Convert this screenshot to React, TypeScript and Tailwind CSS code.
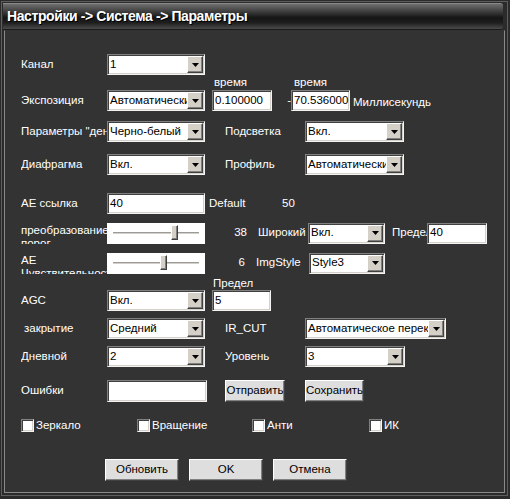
import React from "react";

const sunken =
  "border border-[#808080] border-b-[#f4f4f4] border-r-[#f4f4f4] shadow-[inset_1px_1px_0_#404040,inset_-1px_-1px_0_#d4d0c8]";
const raised =
  "border border-[#ffffff] border-b-[#404040] border-r-[#404040] shadow-[inset_-1px_-1px_0_#808080]";

function Arrow() {
  return (
    <svg width="7" height="4" viewBox="0 0 7 4" aria-hidden="true">
      <path d="M0 0h7L3.5 4z" fill="#000" />
    </svg>
  );
}

function Select({ w, text }: { w: string; text: string }) {
  return (
    <div className={`${w} h-[21px] shrink-0 bg-white flex items-center ${sunken}`}>
      <span className="flex-1 min-w-0 pl-[2px] text-black whitespace-nowrap overflow-hidden">
        {text}
      </span>
      <div className={`w-[16px] h-[17px] mr-[1px] bg-[#d4d0c8] flex items-center justify-center ${raised}`}>
        <Arrow />
      </div>
    </div>
  );
}

function Input({ w, h = "h-[21px]", value }: { w: string; h?: string; value: string }) {
  return (
    <div className={`${w} ${h} shrink-0 bg-white flex items-center pl-[2px] text-black whitespace-nowrap overflow-hidden ${sunken}`}>
      {value}
    </div>
  );
}

function Button({ w, label }: { w: string; label: string }) {
  return (
    <div className={`${w} h-[22px] shrink-0 bg-[#dedede] flex items-center justify-center text-black ${raised}`}>
      {label}
    </div>
  );
}

function Slider({ pos }: { pos: number }) {
  return (
    <div className="w-[98px] h-[21px] shrink-0 bg-white flex items-center px-[6px]">
      <div className="relative flex-1 h-[3px] border-t border-[#9a9a9a] border-b border-b-[#ffffff] bg-[#d4d0c8]">
        <div
          className={`absolute top-[-8px] w-[7px] h-[15px] bg-[#d4d0c8] ${raised}`}
          style={{ left: pos }}
        />
      </div>
    </div>
  );
}

function Label({ children, w = "w-[86px]", extra = "" }: { children: React.ReactNode; w?: string; extra?: string }) {
  return (
    <div className={`${w} h-[21px] shrink-0 flex items-center whitespace-nowrap overflow-hidden ${extra}`}>
      {children}
    </div>
  );
}

function TwoLine({ text }: { text: string }) {
  return (
    <div className="w-[86px] h-[22px] shrink-0 overflow-hidden leading-[13px] pt-[2px]">{text}</div>
  );
}

function Check({ w, label }: { w: string; label: string }) {
  return (
    <div className={`${w} flex items-center shrink-0`}>
      <div className={`w-[13px] h-[13px] bg-white ${sunken}`} />
      <span className="ml-[2px] leading-[13px]">{label}</span>
    </div>
  );
}

export default function App() {
  return (
    <div className="w-[510px] h-[499px] bg-[#2b2b2b] p-[1px] font-['Liberation_Sans',Arial,sans-serif] text-[11.5px] text-white">
      <div className="h-[495px] w-[507px] border border-[#5e5e5e] p-[1px] flex flex-col">
        <div className="h-[27px] shrink-0 mr-[3px] flex items-center pl-[4px] border-t border-[#8a8a8a] border-b border-b-[#1a1a1a] bg-[linear-gradient(#6e6e6e_0%,#3e3e3e_30%,#151515_55%,#1e1e1e_75%,#4a4a4a_100%)] rounded-r-[3px]">
          <span className="text-[14px] font-bold tracking-[-0.4px] text-white [text-shadow:1px_1px_0_#000]">
            Настройки -&gt; Система -&gt; Параметры
          </span>
        </div>
        <div className="flex-1 mx-[1px] mb-[1px] bg-[#333333] border border-[#8a8a8a] border-t-[#333333] pl-[16px] flex flex-col">
          {/* Канал */}
          <div className="mt-[23px] flex items-center">
            <Label>Канал</Label>
            <Select w="w-[98px]" text="1" />
          </div>

          {/* Экспозиция */}
          <div className="flex items-end">
            <Label>Экспозиция</Label>
            <Select w="w-[98px]" text="Автоматически" />
            <div className="ml-[7px] flex flex-col">
              <span className="h-[14px] leading-[14px] pl-[2px]">время</span>
              <div className="mt-[1px]">
                <Input w="w-[60px]" value="0.100000" />
              </div>
            </div>
            <span className="w-[19px] h-[21px] flex items-center justify-end">-</span>
            <div className="flex flex-col">
              <span className="h-[14px] leading-[14px] pl-[3px]">время</span>
              <div className="mt-[1px]">
                <Input w="w-[59px]" value="70.536000" />
              </div>
            </div>
            <span className="ml-[3px] h-[21px] flex items-center pt-[4px]">Миллисекундь</span>
          </div>

          {/* Параметры день/ночь */}
          <div className="mt-[10px] flex items-center">
            <Label>Параметры "день/ночь"</Label>
            <Select w="w-[98px]" text="Черно-белый" />
            <Label w="w-[80px]" extra="ml-[20px]">Подсветка</Label>
            <Select w="w-[99px]" text="Вкл." />
          </div>

          {/* Диафрагма */}
          <div className="mt-[12px] flex items-center">
            <Label>Диафрагма</Label>
            <Select w="w-[98px]" text="Вкл." />
            <Label w="w-[80px]" extra="ml-[20px]">Профиль</Label>
            <Select w="w-[99px]" text="Автоматически" />
          </div>

          {/* AE ссылка */}
          <div className="mt-[18px] flex items-center">
            <Label>AE ссылка</Label>
            <Input w="w-[98px]" value="40" />
            <span className="ml-[4px] w-[73px]">Default</span>
            <span>50</span>
          </div>

          {/* преобразование порог */}
          <div className="mt-[8px] flex items-center">
            <TwoLine text="преобразование порог" />
            <Slider pos={58} />
            <span className="w-[42px] text-right">38</span>
            <Label w="w-[50px]" extra="ml-[11px]">Широкий</Label>
            <Select w="w-[77px]" text="Вкл." />
            <Label w="w-[35px]" extra="ml-[7px]">Предел</Label>
            <Input w="w-[60px]" value="40" />
          </div>

          {/* AE Чувствительность */}
          <div className="mt-[8px] flex items-center">
            <TwoLine text="AE Чувствительность" />
            <Slider pos={47} />
            <span className="w-[40px] text-right">6</span>
            <Label w="w-[53px]" extra="ml-[11px]">ImgStyle</Label>
            <Select w="w-[76px]" text="Style3" />
          </div>

          {/* AGC */}
          <div className="mt-[2px] flex items-end">
            <Label>AGC</Label>
            <Select w="w-[98px]" text="Вкл." />
            <div className="ml-[7px] flex flex-col">
              <span className="h-[14px] leading-[14px] pl-[1px]">Предел</span>
              <Input w="w-[59px]" value="5" />
            </div>
          </div>

          {/* закрытие */}
          <div className="mt-[7px] flex items-center">
            <Label extra="pl-[3px]">закрытие</Label>
            <Select w="w-[98px]" text="Средний" />
            <Label w="w-[80px]" extra="ml-[20px]">IR_CUT</Label>
            <Select w="w-[141px]" text="Автоматическое перек." />
          </div>

          {/* Дневной */}
          <div className="mt-[7px] flex items-center">
            <Label>Дневной</Label>
            <Select w="w-[98px]" text="2" />
            <Label w="w-[80px]" extra="ml-[20px]">Уровень</Label>
            <Select w="w-[100px]" text="3" />
          </div>

          {/* Ошибки */}
          <div className="mt-[13px] flex items-center">
            <Label>Ошибки</Label>
            <Input w="w-[100px]" h="h-[22px]" value="" />
            <div className="ml-[18px]">
              <Button w="w-[60px]" label="Отправить" />
            </div>
            <div className="ml-[20px]">
              <Button w="w-[59px]" label="Сохранить" />
            </div>
          </div>

          {/* checkboxes */}
          <div className="mt-[17px] flex items-center">
            <Check w="w-[116px]" label="Зеркало" />
            <Check w="w-[115px]" label="Вращение" />
            <Check w="w-[117px]" label="Анти" />
            <Check w="w-[60px]" label="ИК" />
          </div>

          {/* bottom buttons */}
          <div className="mt-[27px] ml-[84px] flex items-center gap-[10px]">
            <Button w="w-[74px]" label="Обновить" />
            <Button w="w-[74px]" label="OK" />
            <Button w="w-[74px]" label="Отмена" />
          </div>
        </div>
      </div>
    </div>
  );
}
